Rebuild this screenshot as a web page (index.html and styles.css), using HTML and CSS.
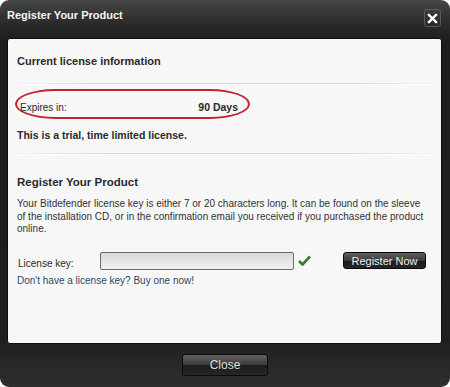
FILE: index.html
```html
<!DOCTYPE html>
<html lang="en">
<head>
    <meta charset="UTF-8">
    <title>Register Your Product</title>
    <link rel="stylesheet" href="styles.css">
</head>
<body>
    <div class="window">
        <div class="titlebar">
            <h1>Register Your Product</h1>
            <button class="close-x" aria-label="Close">
                <svg width="11" height="11" viewBox="0 0 11 11">
                    <path d="M2 2 L9 9 M9 2 L2 9" stroke="#fff" stroke-width="2.4" stroke-linecap="square"/>
                </svg>
            </button>
        </div>

        <div class="panel">
            <h2>Current license information</h2>
            <div class="divider"></div>

            <div class="expires">
                <span>Expires in:</span>
                <strong>90 Days</strong>
            </div>
            <p class="trial">This is a trial, time limited license.</p>
            <div class="divider second"></div>

            <h3>Register Your Product</h3>
            <p class="info">Your Bitdefender license key is either 7 or 20 characters long. It can be found on the sleeve of the installation CD, or in the confirmation email you received if you purchased the product online.</p>

            <div class="key-row">
                <label for="key">License key:</label>
                <input type="text" id="key">
                <svg class="check" width="13" height="11" viewBox="0 0 13 11">
                    <path d="M1 6 L4.5 9.5 L12 1.5" fill="none" stroke="#3c7a22" stroke-width="2.6"/>
                </svg>
                <button class="btn-dark register">Register Now</button>
            </div>
            <a class="buy" href="#">Don't have a license key? Buy one now!</a>
        </div>

        <div class="footer">
            <button class="btn-dark close-btn">Close</button>
        </div>
    </div>
</body>
</html>
```

FILE: styles.css
```css
* {
    margin: 0;
    padding: 0;
    box-sizing: border-box;
}

body {
    background-color: #ffffff;
    font-family: 'Liberation Sans', Arial, sans-serif;
}

.window {
    width: 450px;
    height: 387px;
    border-radius: 9px;
    overflow: hidden;
    background: linear-gradient(#464646 0px, #2a2a2a 24px, #1e1e1e 40px, #1f1f1f 340px, #262626 360px, #2e2e2e 387px);
    display: flex;
    flex-direction: column;
}

.titlebar {
    height: 38px;
    display: flex;
    justify-content: space-between;
    align-items: flex-start;
    padding: 7px 9px 0 7px;
}

.titlebar h1 {
    font-size: 11px;
    font-weight: bold;
    color: #f4f4f4;
    line-height: 16px;
}

.close-x {
    width: 17px;
    height: 18px;
    margin-top: 2px;
    border: 1px solid #5a5a5a;
    border-radius: 3px;
    background: linear-gradient(#3c3c3c, #262626);
    display: flex;
    align-items: center;
    justify-content: center;
}

.panel {
    height: 306px;
    margin: 0 8px 0 7px;
    background-color: #f7f7f7;
    border: 1px solid #0c0c0c;
    border-radius: 3px;
    padding: 14px 7px 0 9px;
    color: #2a2a2a;
    font-size: 10px;
}

.panel h2 {
    font-size: 11px;
    font-weight: bold;
    line-height: 16px;
}

.divider {
    height: 2px;
    margin: 14px 0 0 -2px;
    background: linear-gradient(to right, rgba(0,0,0,0.02), rgba(0,0,0,0.12) 20%, rgba(0,0,0,0.12) 80%, rgba(0,0,0,0.02));
    border-bottom: 1px solid #ffffff;
}

.divider.second {
    margin-top: 11px;
}

.expires {
    width: 235px;
    height: 30px;
    margin: 4px 0 0 -2px;
    padding: 0 10px 0 3px;
    border: 2px solid #c2232f;
    border-radius: 40px / 15px;
    display: flex;
    justify-content: space-between;
    align-items: center;
}

.expires span {
    margin-top: 6px;
}

.expires strong {
    margin-top: 6px;
    font-size: 10.5px;
}

.trial {
    font-size: 10.5px;
    font-weight: bold;
    margin-top: 9px;
    line-height: 14px;
}

.panel h3 {
    font-size: 11.5px;
    font-weight: bold;
    margin-top: 19px;
    line-height: 16px;
}

.info {
    margin: 8px 10px 0 0;
    line-height: 12.5px;
    color: #333;
}

.key-row {
    display: flex;
    align-items: center;
    margin-top: 16px;
    padding-left: 1px;
    height: 18px;
}

.key-row label {
    width: 82px;
    margin-top: 6px;
}

.key-row input {
    width: 194px;
    height: 18px;
    border: 1px solid #6a6a6a;
    border-radius: 2px;
    background: linear-gradient(#d8d8d8, #f2f2f2);
}

.check {
    margin-left: 4px;
}

.btn-dark {
    border: 1px solid #0a0a0a;
    border-radius: 3px;
    background: linear-gradient(#606060, #3a3a3a 50%, #1c1c1c 51%, #262626);
    color: #eeeeee;
    font-family: 'Liberation Sans', Arial, sans-serif;
}

.register {
    width: 83px;
    height: 17px;
    margin-left: auto;
    margin-right: 8px;
    font-size: 11px;
}

.buy {
    display: block;
    margin-top: 5px;
    color: #2b4a6a;
    text-decoration: none;
}

.footer {
    flex: 1;
    display: flex;
    justify-content: center;
    padding-top: 10px;
}

.close-btn {
    width: 86px;
    height: 22px;
    font-size: 12px;
    color: #dddddd;
}
```
